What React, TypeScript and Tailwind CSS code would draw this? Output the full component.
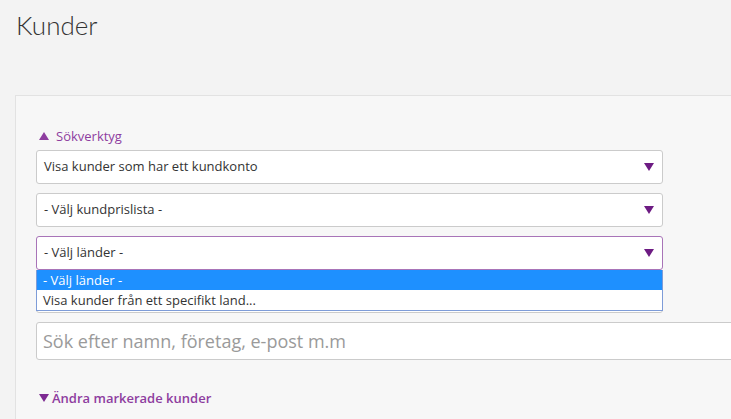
import { useState } from 'react';

const font = { fontFamily: '"Open Sans", "Liberation Sans", sans-serif' };

function Caret({ up, color = '#6d1b83' }: { up?: boolean; color?: string }) {
  return (
    <svg width="10" height="8" viewBox="0 0 10 8" className="shrink-0">
      <path d={up ? 'M0 8 H10 L5 0 Z' : 'M0 0 H10 L5 8 Z'} fill={color} />
    </svg>
  );
}

function SelectBox({ label, focused }: { label: string; focused?: boolean }) {
  return (
    <div
      className={
        'flex h-[34px] w-[627px] items-center justify-between rounded-[3px] border bg-white pl-[7px] pr-[8px] text-[13px] text-[#333] ' +
        (focused ? 'border-[#a874b8]' : 'border-[#cbcbcb]')
      }
    >
      <span>{label}</span>
      <Caret />
    </div>
  );
}

export default function App() {
  const [options] = useState(['- Välj länder -', 'Visa kunder från ett specifikt land...']);

  return (
    <div className="h-[419px] overflow-hidden bg-[#f3f3f3]" style={font}>
      <h1
        className="pl-4 pt-[8px] text-[26px] leading-[34px] font-light text-[#333]"
        style={{ fontFamily: 'Lato, "Open Sans", sans-serif' }}
      >
        Kunder
      </h1>

      <div className="mt-[53px] ml-[15px] h-[400px] border-l border-t border-[#e2e2e2] bg-[#f7f7f7] pt-[30px] pl-[20px]">
        <div className="flex items-center gap-[7px] pl-[3px] text-[13px] leading-5 text-[#8e3d9f]">
          <Caret up color="#8e3d9f" />
          <span>Sökverktyg</span>
        </div>

        <div className="mt-[4px] flex flex-col gap-[9px]">
          <SelectBox label="Visa kunder som har ett kundkonto" />
          <SelectBox label="- Välj kundprislista -" />
          <div className="relative">
            <SelectBox label="- Välj länder -" focused />
            <div className="absolute top-full left-0 z-10 w-[627px] border-x border-b border-[#7e9cd8] bg-white text-[13px] leading-5 text-[#333]">
              {options.map((o, i) => (
                <div key={o} className={'pl-[6px] ' + (i === 0 ? 'bg-[#1e90ff] text-white' : '')}>
                  {o}
                </div>
              ))}
            </div>
          </div>
          <SelectBox label="" />
          <div className="flex h-[38px] w-[760px] items-center rounded-[3px] border border-[#cbcbcb] bg-white pl-[6px] text-[18px] text-[#9a9a9a]">
            Sök efter namn, företag, e-post m.m
          </div>
        </div>

        <div className="mt-[28px] flex items-center gap-[3px] pl-[3px] text-[13px] leading-5 font-semibold text-[#8e3d9f]">
          <Caret color="#7d2a92" />
          <span>Ändra markerade kunder</span>
        </div>
      </div>
    </div>
  );
}
